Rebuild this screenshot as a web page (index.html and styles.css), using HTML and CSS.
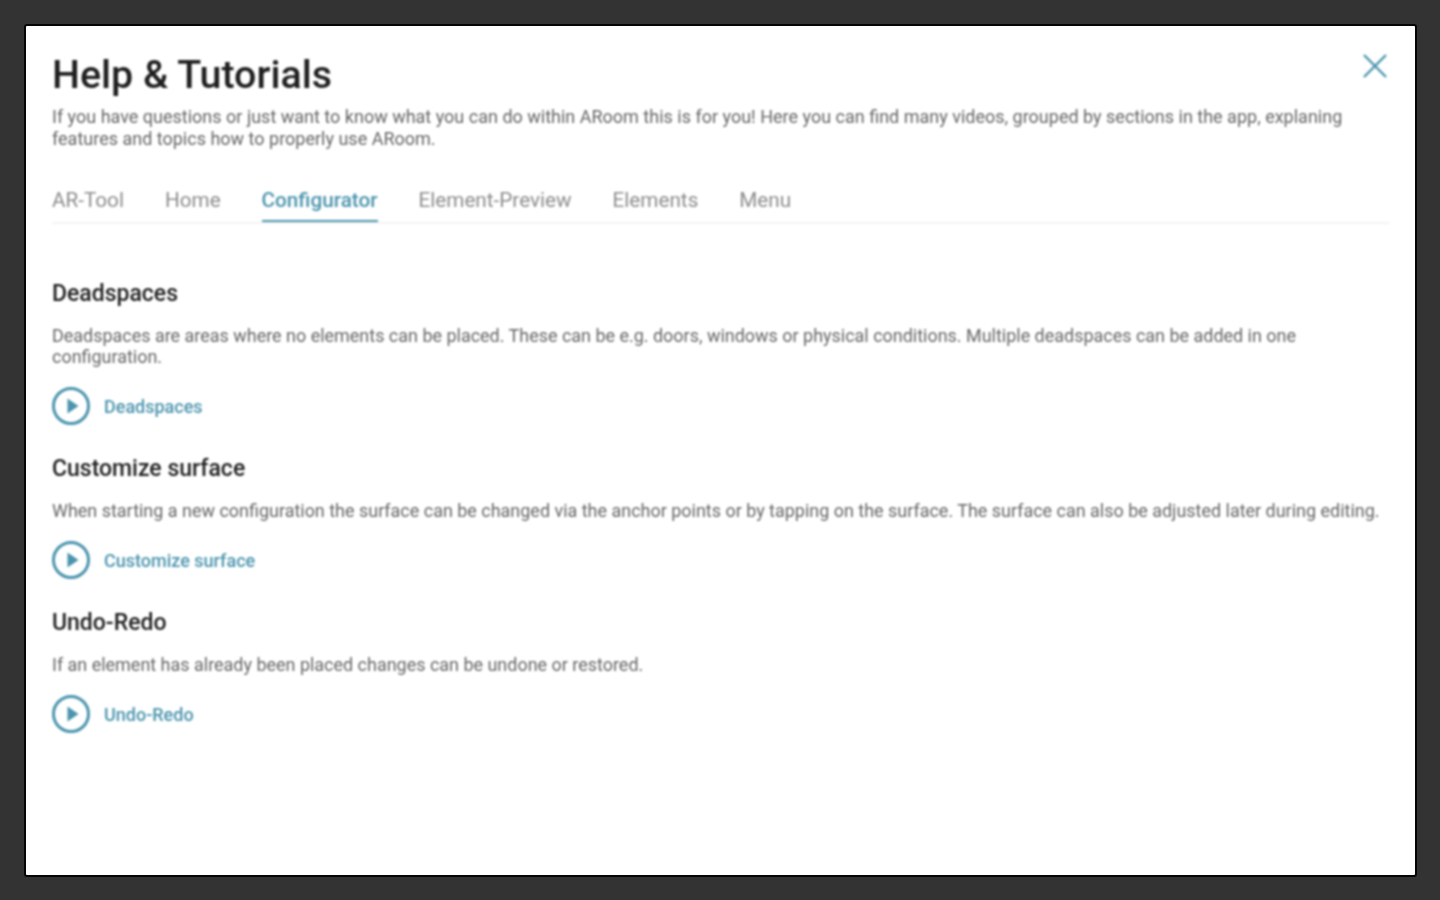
FILE: index.html
```html
<!DOCTYPE html>
<html lang="en">
<head>
    <meta charset="UTF-8">
    <title>Help &amp; Tutorials</title>
    <link rel="stylesheet" href="styles.css">
</head>
<body>
    <div class="modal">
        <div class="modal-content">
            <button class="close-button" aria-label="Close">
                <svg width="26" height="26" viewBox="0 0 26 26"><path d="M2 2 L24 24 M24 2 L2 24"/></svg>
            </button>
            <h1>Help &amp; Tutorials</h1>
            <p class="intro">If you have questions or just want to know what you can do within ARoom this is for you! Here you can find many videos, grouped by sections in the app, explaning features and topics how to properly use ARoom.</p>

            <nav class="tabs">
                <a class="tab">AR-Tool</a>
                <a class="tab">Home</a>
                <a class="tab active">Configurator</a>
                <a class="tab">Element-Preview</a>
                <a class="tab">Elements</a>
                <a class="tab">Menu</a>
            </nav>

            <section class="topic first">
                <h2>Deadspaces</h2>
                <p>Deadspaces are areas where no elements can be placed. These can be e.g. doors, windows or physical conditions. Multiple deadspaces can be added in one configuration.</p>
                <a class="video-link">
                    <svg class="play-icon" width="38" height="38" viewBox="0 0 38 38"><circle cx="19" cy="19" r="17.5"/><path d="M15.5 11.5 L26.5 19 L15.5 26.5 Z"/></svg>
                    <span>Deadspaces</span>
                </a>
            </section>

            <section class="topic">
                <h2>Customize surface</h2>
                <p>When starting a new configuration the surface can be changed via the anchor points or by tapping on the surface. The surface can also be adjusted later during editing.</p>
                <a class="video-link">
                    <svg class="play-icon" width="38" height="38" viewBox="0 0 38 38"><circle cx="19" cy="19" r="17.5"/><path d="M15.5 11.5 L26.5 19 L15.5 26.5 Z"/></svg>
                    <span>Customize surface</span>
                </a>
            </section>

            <section class="topic">
                <h2>Undo-Redo</h2>
                <p>If an element has already been placed changes can be undone or restored.</p>
                <a class="video-link">
                    <svg class="play-icon" width="38" height="38" viewBox="0 0 38 38"><circle cx="19" cy="19" r="17.5"/><path d="M15.5 11.5 L26.5 19 L15.5 26.5 Z"/></svg>
                    <span>Undo-Redo</span>
                </a>
            </section>
        </div>
    </div>
</body>
</html>
```

FILE: styles.css
```css
html, body {
    height: 100%;
}

body {
    margin: 0;
    box-sizing: border-box;
    padding: 24px 23px 23px 24px;
    background-color: #333333;
    font-family: Roboto, "Liberation Sans", sans-serif;
}

/* Dialog */
.modal {
    box-sizing: border-box;
    height: 100%;
    background-color: #fff;
    border: 2px solid #050505;
    border-radius: 3px;
}

/* The reference is a soft, upscaled capture */
.modal-content {
    position: relative;
    box-sizing: border-box;
    height: 100%;
    padding: 26px 25px 0 26px;
    filter: blur(0.8px);
}

.close-button {
    position: absolute;
    top: 27px;
    right: 27px;
    padding: 0;
    border: none;
    background: none;
    line-height: 0;
}

.close-button path {
    fill: none;
    stroke: #4a94ad;
    stroke-width: 2.4;
}

h1 {
    margin: 0;
    font-size: 39.4px;
    line-height: 46px;
    font-weight: 500;
    color: #1f1f1f;
}

.intro {
    margin: 8px 0 0;
    font-size: 18px;
    line-height: 22px;
    color: #666;
}

/* Tabs */
.tabs {
    display: flex;
    gap: 41px;
    margin-top: 38px;
    border-bottom: 2px solid #f4f4f4;
}

.tab {
    padding: 0 0 8px;
    font-size: 20.7px;
    line-height: 24px;
    color: #8c8c8c;
    border-bottom: 2px solid transparent;
}

.tab.active {
    color: #4a94ad;
    font-weight: 500;
    border-bottom-color: #4a94ad;
}

/* Topics */
.topic {
    margin-top: 30px;
}

.topic.first {
    margin-top: 56px;
}

h2 {
    margin: 0;
    font-size: 23px;
    line-height: 28px;
    font-weight: 500;
    color: #1f1f1f;
}

.topic p {
    margin: 17px 0 0;
    font-size: 17.97px;
    line-height: 21px;
    color: #666;
}

.video-link {
    display: flex;
    align-items: center;
    gap: 14px;
    margin-top: 20px;
    font-size: 18px;
    font-weight: 500;
    color: #4a94ad;
}

.play-icon circle {
    fill: none;
    stroke: #4a94ad;
    stroke-width: 3;
}

.play-icon path {
    fill: #4a94ad;
}
```
